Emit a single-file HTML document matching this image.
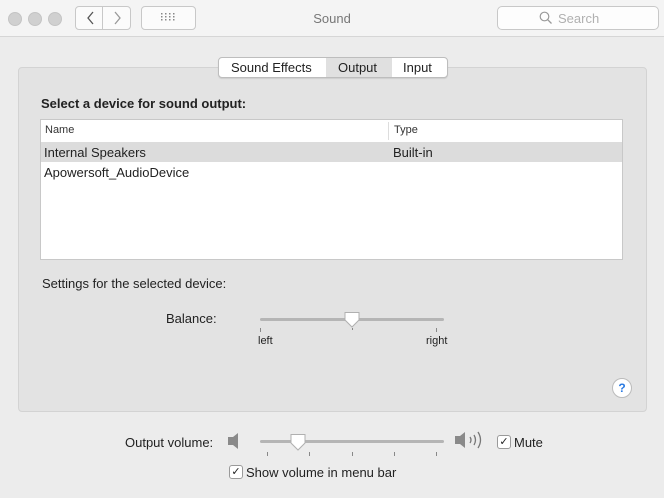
<!DOCTYPE html>
<html><head><style>
body{margin:0;width:664px;height:498px;background:#ececec;font-family:"Liberation Sans",sans-serif;font-size:13px;color:#222;position:relative;overflow:hidden}
.a{position:absolute}
.dot{width:12px;height:12px;border-radius:50%;background:#d0d0d0;border:1px solid #c4c4c4;top:12px}
.btn{background:#fbfbfb;border:1px solid #c8c8c8;border-radius:4px}
.tick{position:absolute;width:1px;height:4px;background:#888}
.cb{width:12px;height:12px;border:1px solid #9a9a9a;border-radius:3px;background:#fff;font-size:11px;line-height:12px;text-align:center}
</style></head><body>
<div class="a" style="left:0;top:0;width:664px;height:36px;background:#f4f4f4;border-bottom:1px solid #d6d6d6"></div>
<div class="a dot" style="left:8px"></div><div class="a dot" style="left:28px"></div><div class="a dot" style="left:48px"></div>
<div class="a btn" style="left:75px;top:6px;width:54px;height:22px"></div>
<div class="a" style="left:102px;top:7px;width:1px;height:22px;background:#c8c8c8"></div>
<svg class="a" style="left:84px;top:10px" width="40" height="16"><path d="M9 2L4 8L9 14" stroke="#555" fill="none" stroke-width="1.3"/><path d="M31 2L36 8L31 14" stroke="#999" fill="none" stroke-width="1.3"/></svg>
<div class="a btn" style="left:141px;top:6px;width:53px;height:22px"></div>
<svg class="a" style="left:160px;top:12px" width="16" height="10"><g fill="#888"><rect x="1" y="1" width="1.5" height="1.5"/><rect x="5" y="1" width="1.5" height="1.5"/><rect x="9" y="1" width="1.5" height="1.5"/><rect x="13" y="1" width="1.5" height="1.5"/><rect x="1" y="4" width="1.5" height="1.5"/><rect x="5" y="4" width="1.5" height="1.5"/><rect x="9" y="4" width="1.5" height="1.5"/><rect x="13" y="4" width="1.5" height="1.5"/><rect x="1" y="7" width="1.5" height="1.5"/><rect x="5" y="7" width="1.5" height="1.5"/><rect x="9" y="7" width="1.5" height="1.5"/><rect x="13" y="7" width="1.5" height="1.5"/></g></svg>
<div class="a" style="left:0;width:664px;top:11px;text-align:center;color:#777;font-size:13px">Sound</div>
<div class="a btn" style="left:497px;top:6px;width:160px;height:22px;background:#fdfdfd;border-radius:5px"></div>
<svg class="a" style="left:539px;top:11px" width="14" height="14"><circle cx="5.5" cy="5.5" r="4.3" stroke="#999" fill="none" stroke-width="1.2"/><path d="M8.7 8.7L12.5 12.5" stroke="#999" stroke-width="1.3"/></svg>
<div class="a" style="left:558px;top:11px;color:#b0b0b0">Search</div>

<div class="a" style="left:18px;top:67px;width:627px;height:343px;background:#e3e3e3;border:1px solid #d3d3d3;border-radius:4px"></div>
<div class="a" style="left:218px;top:57px;width:228px;height:19px;background:#fff;border:1px solid #bdbdbd;border-radius:4px;box-shadow:0 1px 1px rgba(0,0,0,.1)"></div>
<div class="a" style="left:326px;top:58px;width:66px;height:19px;background:#e0e0e0"></div>
<div class="a" style="left:231px;top:60px">Sound Effects</div>
<div class="a" style="left:338px;top:60px">Output</div>
<div class="a" style="left:403px;top:60px">Input</div>

<div class="a" style="left:41px;top:96px;font-weight:bold">Select a device for sound output:</div>
<div class="a" style="left:40px;top:119px;width:581px;height:139px;background:#fff;border:1px solid #c8c8c8"></div>
<div class="a" style="left:41px;top:142px;width:581px;height:20px;background:#dcdcdc"></div>
<div class="a" style="left:388px;top:122px;width:1px;height:18px;background:#ddd"></div>
<div class="a" style="left:45px;top:124px;font-size:11px;color:#333">Name</div>
<div class="a" style="left:394px;top:124px;font-size:11px;color:#333">Type</div>
<div class="a" style="left:44px;top:145px">Internal Speakers</div>
<div class="a" style="left:393px;top:145px">Built-in</div>
<div class="a" style="left:44px;top:165px">Apowersoft_AudioDevice</div>

<div class="a" style="left:42px;top:276px">Settings for the selected device:</div>
<div class="a" style="left:166px;top:311px">Balance:</div>
<div class="a" style="left:260px;top:318px;width:184px;height:3px;background:#b5b5b5;border-radius:2px"></div>
<div class="tick" style="left:260px;top:328px"></div><div class="tick" style="left:436px;top:328px"></div>
<div class="tick" style="left:352px;top:328px;height:2px"></div>
<svg class="a" style="left:343px;top:311px" width="18" height="18"><path d="M2 1.5H16V9L9 16L2 9Z" fill="#fff" stroke="#b0b0b0"/></svg>
<div class="a" style="left:258px;top:335px;font-size:11px">left</div>
<div class="a" style="left:426px;top:335px;font-size:11px">right</div>
<div class="a" style="left:612px;top:378px;width:18px;height:18px;border-radius:50%;background:#fff;border:1px solid #bbb;color:#2a7ae2;font-size:12px;text-align:center;line-height:18px;font-weight:bold">?</div>

<div class="a" style="left:125px;top:435px">Output volume:</div>
<svg class="a" style="left:226px;top:431px" width="16" height="20"><path d="M2 6H7L12 2V18L7 14H2Z" fill="#8a8a8a"/></svg>
<div class="a" style="left:260px;top:440px;width:184px;height:3px;background:#b5b5b5;border-radius:2px"></div>
<div class="tick" style="left:267px;top:452px"></div><div class="tick" style="left:309px;top:452px"></div><div class="tick" style="left:352px;top:452px"></div><div class="tick" style="left:394px;top:452px"></div><div class="tick" style="left:436px;top:452px"></div>
<svg class="a" style="left:289px;top:433px" width="18" height="20"><path d="M2 1.5H16V10L9 17L2 10Z" fill="#fff" stroke="#b0b0b0"/></svg>
<svg class="a" style="left:454px;top:428px" width="34" height="26"><path d="M1 8H6L11 4V20L6 16H1Z" fill="#8a8a8a"/><path d="M16 9Q18 12 16 15M20 7Q23 12 20 17M24 4Q29 12 24 20" stroke="#777" fill="none" stroke-width="1.3"/></svg>
<div class="a cb" style="left:497px;top:435px">✓</div>
<div class="a" style="left:514px;top:435px">Mute</div>
<div class="a cb" style="left:229px;top:465px">✓</div>
<div class="a" style="left:246px;top:465px">Show volume in menu bar</div>
</body></html>
